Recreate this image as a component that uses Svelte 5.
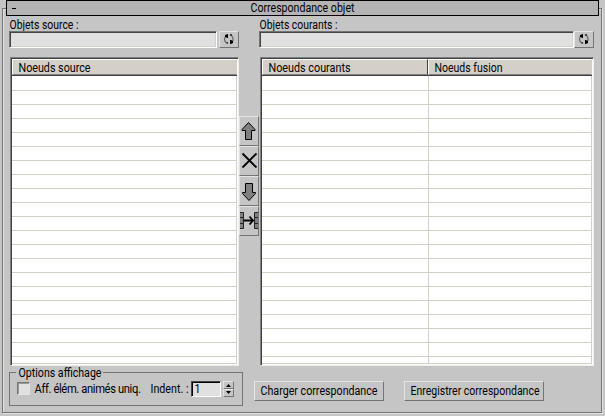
<script>
  const rows = Array.from({ length: 21 }, (_, i) => i);
  const tools = ['up', 'delete', 'down', 'merge'];
  const lists = [
    { label: 'Objets source :', width: 69, columns: [{ text: 'Noeuds source', width: 72 }] },
    {
      label: 'Objets courants :',
      width: 78,
      columns: [
        { text: 'Noeuds courants', width: 82 },
        { text: 'Noeuds fusion', width: 68 },
      ],
    },
  ];
</script>

{#snippet label(text, width)}
  <svg class="label" width={width + 2} height="15">
    <text x="0.5" y="12" textLength={width} lengthAdjust="spacingAndGlyphs">{text}</text>
  </svg>
{/snippet}

{#snippet panel(list, kind)}
  <section class="panel {kind}">
    <div class="caption">{@render label(list.label, list.width)}</div>
    <div class="picker">
      <div class="field"></div>
      <button class="refresh" aria-label="Actualiser">
        <svg width="18" height="15" viewBox="0 0 18 15">
          <path d="M6 4Q4.5 5.5 4.5 7.5Q4.5 9.5 7 11M10 2.5Q13.5 4 13 9" fill="none" stroke="#666" stroke-width="1.2" />
          <path d="M5 3L8 2V6H7L6 5H5ZM10 8H11L13 9V11L11 12H10Z" fill="#000" />
          <path d="M6 10H8V12H7ZM10 2H12V4H10Z" fill="#444" />
        </svg>
      </button>
    </div>
    <div class="list">
      <div class="head">
        {#each list.columns as column}
          <div class="th">{@render label(column.text, column.width)}</div>
        {/each}
      </div>
      <div class="body">
        {#each rows as row (row)}
          <div class="row">
            {#each list.columns as column}<div class="cell"></div>{/each}
          </div>
        {/each}
      </div>
    </div>
  </section>
{/snippet}

<main>
  <div class="frame"></div>
  <header><span class="minus"></span>{@render label('Correspondance objet', 104)}</header>
  <div class="panels">
    {@render panel(lists[0], 'source')}
    <nav>
      {#each tools as tool}
        <button class="tool" aria-label={tool}>
          <svg width="18" height="28" viewBox="0 0 18 28">
            {#if tool === 'up'}
              <path d="M8.5 5.5L15 12.5V13.5H11.5V22.5H5.5V13.5H2V12.5Z" fill="#808080" stroke="#000" />
            {:else if tool === 'delete'}
              <path d="M2.5 6.5L16.5 20.5M16.5 6.5L2.5 20.5" fill="none" stroke="#000" stroke-width="1.8" />
            {:else if tool === 'down'}
              <path d="M9 23.5L15.5 16.5V15.5H12.5V6.5H5.5V15.5H2.5V16.5Z" fill="#808080" stroke="#000" />
            {:else}
              <path d="M0 5.5H3.5V21.5H0M0 10.5H3.5M0 16.5H3.5M18 5.5H14.5V21.5H18M14.5 10.5H18M14.5 16.5H18" fill="#808080" stroke="#222" />
              <path d="M4 13.5H13M9.5 9.5L13 13.5L9.5 17.5" fill="none" stroke="#000" stroke-width="1.8" />
            {/if}
          </svg>
        </button>
      {/each}
    </nav>
    {@render panel(lists[1], 'current')}
  </div>
  <footer>
    <div class="group">
      <div class="legend">{@render label('Options affichage', 83)}</div>
      <div class="options">
        <span class="check"></span>
        <div class="only">{@render label('Aff. élém. animés uniq.', 106)}</div>
        <div class="indent">{@render label('Indent. :', 38)}</div>
        <div class="number">{@render label('1', 6)}</div>
        <div class="spinner">
          <button aria-label="Plus"><svg width="9" height="6"><path d="M2 5L4.5 2L7 5Z" /></svg></button>
          <button aria-label="Moins"><svg width="9" height="6"><path d="M2 1L4.5 4L7 1Z" /></svg></button>
        </div>
      </div>
    </div>
    <button class="action load">{@render label('Charger correspondance', 117)}</button>
    <button class="action save">{@render label('Enregistrer correspondance', 129)}</button>
  </footer>
</main>

<style>
  :global(body) { background: #c5c5c5; }
  * { box-sizing: border-box; }
  svg { display: block; flex: none; }
  button { padding: 0; margin: 0; border-radius: 0; background: #c5c5c5; border: 1px solid; border-color: #e4e4e4 #747474 #747474 #e4e4e4; }
  main { position: relative; width: 605px; height: 416px; overflow: hidden; background: #c5c5c5; font: 12px Roboto, "Liberation Sans", sans-serif; color: #000; }
  .label { overflow: visible; font: 12px Roboto, "Liberation Sans", sans-serif; }
  .label text { fill: #000; }
  .frame { position: absolute; left: 2px; top: 8px; width: 600px; height: 405px; border: 1px solid #747474; box-shadow: inset 1px 1px #e2e2e2, 1px 1px #e2e2e2; }
  header { position: relative; margin-left: 6px; width: 593px; height: 16px; border: 1px solid #000; background: #b4b4b4; display: flex; justify-content: center; }
  header .label { margin-top: -1px; }
  .minus { position: absolute; left: 5px; top: 7px; width: 4px; height: 1px; background: #000; }
  .panels { position: relative; display: flex; height: 349px; padding-left: 9px; }
  .source { width: 230px; }
  .current { width: 335px; }
  .caption { height: 15px; padding-top: 1px; }
  .picker { display: flex; gap: 2px; height: 17px; }
  .field { flex: 1; background: #e0e0e0; border: 1px solid; border-color: #747474 #fff #fff #747474; box-shadow: inset 1px 1px #444, inset -1px -1px #d4d0c8; }
  .current .picker { gap: 0; }
  .refresh { width: 20px; height: 17px; }
  .list { margin: 9px 0 0 1px; height: 309px; background: #fff; border: 1px solid; border-color: #808080 #f0eee8 #f0eee8 #808080; box-shadow: inset 1px 1px #404040; padding: 1px; }
  .head { display: flex; height: 17px; border-bottom: 1px solid #404040; }
  .th { flex: 1; background: #d4d0c8; border: 1px solid; border-color: #fff #d4d0c8 #808080 #fff; padding: 0 0 0 5px; }
  .current .th:first-child { flex: 0 0 166px; border-right: 1px solid #404040; }
  .body { height: 288px; overflow: hidden; border-right: 1px solid #d4d0c8; border-bottom: 1px solid #d4d0c8; }
  .row { height: 14px; display: flex; }
  .row:first-child { height: 15px; }
  .cell { flex: 1; border-bottom: 1px solid #d4d0c8; }
  .current .cell:first-child { flex: 0 0 167px; border-right: 1px solid #d4d0c8; }
  nav { width: 20px; padding-top: 100px; display: flex; flex-direction: column; }
  .tool { width: 20px; height: 30px; }
  footer { position: relative; display: flex; padding-left: 9px; height: 45px; padding-top: 7px; }
  .group { width: 234px; height: 34px; border: 1px solid #747474; }
  .legend { width: 87px; margin: -2px 0 0 6px; padding-left: 2px; background: #c5c5c5; height: 9px; }
  .legend .label { position: relative; top: -6px; }
  .options { display: flex; padding: 1px 0 0 7px; }
  .check { width: 13px; height: 13px; margin-top: 1px; background: #e0e0e0; border: 1px solid; border-color: #747474 #e4e4e4 #e4e4e4 #747474; box-shadow: inset 1px 1px #999; }
  .only { margin-left: 4px; width: 116px; }
  .only .label { letter-spacing: -0.4px; }
  .indent { width: 41px; }
  .number { width: 30px; height: 16px; background: #e0e0e0; border: 1px solid; border-color: #444 #fff #fff #444; box-shadow: inset 1px 1px #000; padding-left: 2px; }
  .number .label { margin-top: -1px; }
  .spinner { margin-left: 2px; width: 11px; height: 16px; }
  .spinner button { display: block; width: 11px; height: 8px; }
  .action { height: 20px; margin-top: 9px; padding: 0 0 2px 5px; margin-top: 1px; margin-top: 9px; display: flex; align-items: center; }
  .load { width: 130px; margin-left: 11px; }
  .save { width: 140px; margin-left: 20px; }
</style>
